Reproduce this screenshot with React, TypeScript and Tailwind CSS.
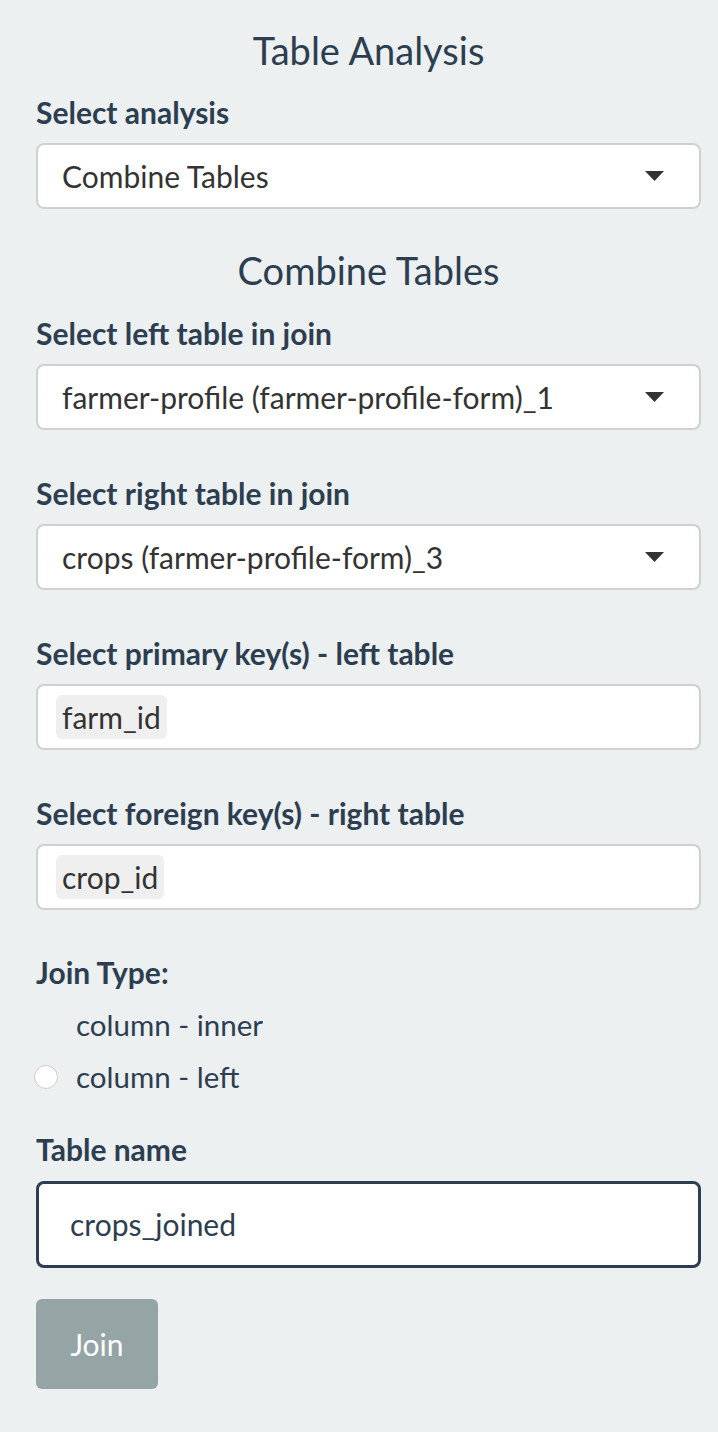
import React from 'react';

const font = { fontFamily: 'Lato, "Noto Sans", sans-serif' };

function Label({ children }: { children: React.ReactNode }) {
  return (
    <div className="h-[40px] leading-[40px] mb-[11px] text-[30px] font-bold text-[#2c3e50] whitespace-nowrap">{children}</div>
  );
}

function Caret() {
  return (
    <svg width="19" height="10" viewBox="0 0 19 10" className="shrink-0">
      <polygon points="0,0 19,0 9.5,10" fill="#333333" />
    </svg>
  );
}

function SelectBox({ value }: { value: string }) {
  return (
    <div className="h-[66px] flex items-center justify-between bg-white border-2 border-[#d0d0d0] rounded-[8px] pl-[24px] pr-[35px]">
      <span className="text-[30px] text-[#333333] whitespace-nowrap">{value}</span>
      <Caret />
    </div>
  );
}

function ChipBox({ value }: { value: string }) {
  return (
    <div className="h-[66px] flex items-center bg-white border-2 border-[#d0d0d0] rounded-[8px] pl-[18px]">
      <span className="h-[44px] leading-[44px] px-[6px] rounded-[6px] bg-[#efefef] text-[30px] text-[#333333]">{value}</span>
    </div>
  );
}

export default function App() {
  return (
    <div className="min-h-[1432px] bg-[#ecf0f1] pl-[36px] pr-[17px] pt-[25px]" style={font}>
      <h3 className="h-[50px] leading-[50px] text-center text-[38px] text-[#2c3e50] mb-[17px]">Table Analysis</h3>

      <Label>Select analysis</Label>
      <SelectBox value="Combine Tables" />

      <h4 className="h-[50px] leading-[50px] text-center text-[38px] text-[#2c3e50] mt-[36px] mb-[18px]">Combine Tables</h4>

      <Label>Select left table in join</Label>
      <SelectBox value="farmer-profile (farmer-profile-form)_1" />

      <div className="mt-[43px]">
        <Label>Select right table in join</Label>
        <SelectBox value="crops (farmer-profile-form)_3" />
      </div>

      <div className="mt-[43px]">
        <Label>Select primary key(s) - left table</Label>
        <ChipBox value="farm_id" />
      </div>

      <div className="mt-[43px]">
        <Label>Select foreign key(s) - right table</Label>
        <ChipBox value="crop_id" />
      </div>

      <div className="mt-[42px]">
        <div className="h-[40px] leading-[40px] mb-[7px] text-[30px] font-bold text-[#2c3e50]">Join Type:</div>
        <div className="h-[52px] flex items-center pl-[40px] text-[29.5px] text-[#2c3e50]">column - inner</div>
        <div className="h-[52px] flex items-center text-[29.5px] text-[#2c3e50]">
          <span className="w-[24px] h-[24px] rounded-full bg-white border border-[#cccccc] -ml-[2px] mr-[18px]" />
          column - left
        </div>
      </div>

      <div className="mt-[26px]">
        <div className="h-[40px] leading-[40px] mb-[12px] text-[30px] font-bold text-[#2c3e50]">Table name</div>
        <div className="h-[87px] flex items-center bg-white border-[3px] border-[#2c3e50] rounded-[8px] pl-[31px]">
          <span className="text-[30px] text-[#2c3e50]">crops_joined</span>
        </div>
      </div>

      <button
        type="button"
        className="mt-[31px] w-[122px] h-[90px] rounded-[6px] bg-[#95a5a6] text-white text-[30px]"
        style={font}
      >
        Join
      </button>
    </div>
  );
}
